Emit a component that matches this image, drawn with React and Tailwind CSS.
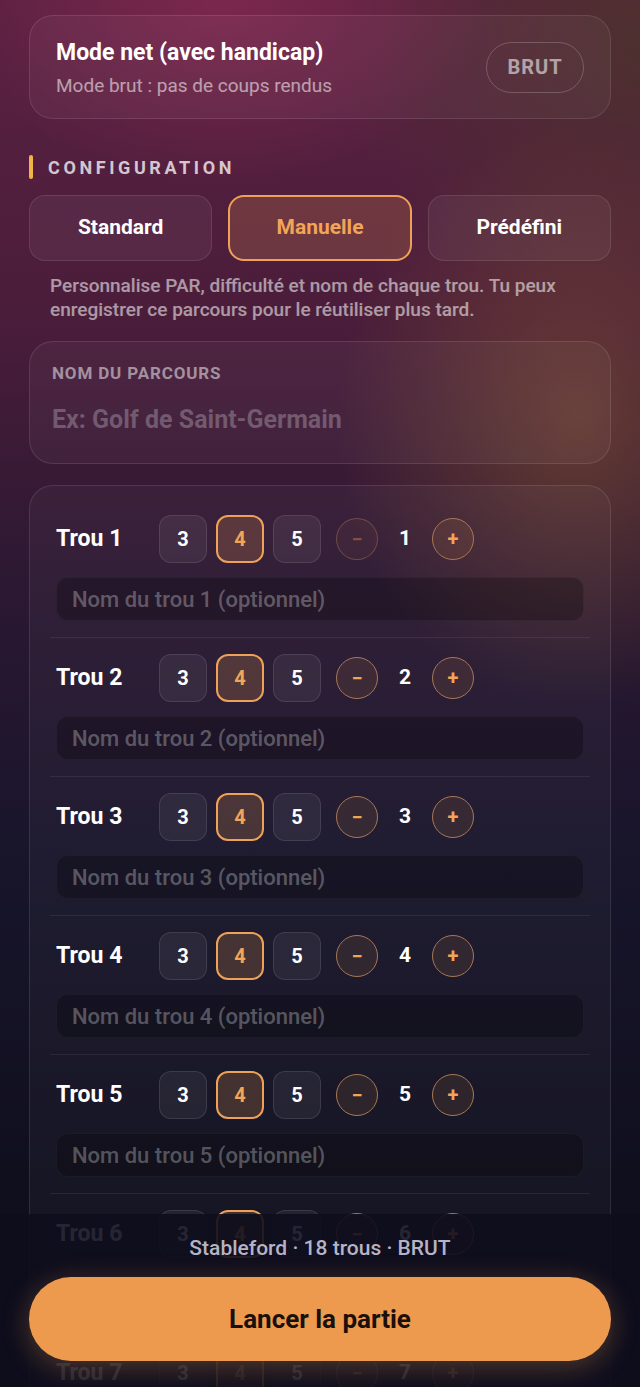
import React from 'react'

const holes = [1, 2, 3, 4, 5, 6, 7]

function ParButton({ value, active }) {
  return (
    <button
      className={
        active
          ? 'flex h-12 w-12 items-center justify-center rounded-xl border-2 border-[#eea157] bg-[#ec9a4e]/20 text-[20px] font-bold text-[#f2a457]'
          : 'flex h-12 w-12 items-center justify-center rounded-xl border border-white/10 bg-white/[0.06] text-[20px] font-bold text-white'
      }
    >
      {value}
    </button>
  )
}

function RoundButton({ children, disabled }) {
  return (
    <button
      className={
        disabled
          ? 'flex h-[42px] w-[42px] items-center justify-center rounded-full border-[1.5px] border-[#a07050]/50 bg-[#ec9a4e]/5 text-[20px] font-bold leading-none text-[#ec9a4e]/40'
          : 'flex h-[42px] w-[42px] items-center justify-center rounded-full border-[1.5px] border-[#a87752] bg-[#ec9a4e]/10 text-[20px] font-bold leading-none text-[#f2a457]'
      }
    >
      {children}
    </button>
  )
}

function HoleRow({ n }) {
  return (
    <div className="border-b border-white/[0.07] px-[6px] py-4">
      <div className="flex items-center">
        <div className="w-[103px] text-[23px] font-bold text-white">Trou {n}</div>
        <div className="flex gap-[9px]">
          <ParButton value={3} />
          <ParButton value={4} active />
          <ParButton value={5} />
        </div>
        <div className="ml-[15px] flex items-center">
          <RoundButton disabled={n === 1}>−</RoundButton>
          <div className="w-[54px] text-center text-[21px] font-bold text-white">{n}</div>
          <RoundButton>+</RoundButton>
        </div>
      </div>
      <div className="mt-[14px] flex h-[44px] items-center rounded-xl border border-white/[0.04] bg-black/25 px-[15px] text-[22px] font-medium text-white/30">
        Nom du trou {n} (optionnel)
      </div>
    </div>
  )
}

export default function App() {
  return (
    <div className="relative h-[1387px] overflow-hidden bg-[#0f0e1d] bg-[radial-gradient(ellipse_50%_28%_at_90%_30%,rgba(125,80,48,0.6),transparent_75%),radial-gradient(ellipse_55%_18%_at_35%_0%,rgba(150,45,85,0.55),transparent_75%),radial-gradient(ellipse_60%_25%_at_100%_3%,rgba(75,52,42,0.8),transparent_80%),linear-gradient(180deg,#5b2142_0%,#4b1d3b_22%,#2c1832_42%,#18152b_62%,#100f1e_85%,#0e0d1b_100%)] font-['Roboto',sans-serif]">
      <div className="px-[29px] pt-[15px]">
        {/* handicap toggle */}
        <div className="flex h-[104px] items-center justify-between rounded-3xl border border-white/10 bg-white/[0.04] px-[26px]">
          <div className="pt-[3px]">
            <div className="text-[23px] font-bold leading-7 text-white">Mode net (avec handicap)</div>
            <div className="mt-[7px] text-[19px] leading-6 text-white/55">Mode brut : pas de coups rendus</div>
          </div>
          <button className="flex h-[51px] w-[98px] items-center justify-center rounded-full border-[1.5px] border-white/20 text-[20px] font-bold tracking-wider text-white/55">
            BRUT
          </button>
        </div>

        {/* configuration */}
        <div className="mt-9 flex h-6 items-center">
          <div className="h-6 w-1 rounded-full bg-[#f2b544]" />
          <div className="ml-[15px] text-[18px] font-bold tracking-[0.2em] text-white/75">CONFIGURATION</div>
        </div>

        <div className="mt-4 grid grid-cols-3 gap-4">
          <button className="h-[66px] rounded-2xl border border-white/10 bg-white/[0.05] text-[21px] font-bold text-white">Standard</button>
          <button className="h-[66px] rounded-2xl border-2 border-[#eea157] bg-[#ec9a4e]/20 text-[21px] font-bold text-[#f2a457]">Manuelle</button>
          <button className="h-[66px] rounded-2xl border border-white/10 bg-white/[0.05] text-[21px] font-bold text-white">Prédéfini</button>
        </div>

        <p className="mt-[13px] px-[21px] text-[19px] font-medium leading-6 text-white/55">
          Personnalise PAR, difficulté et nom de chaque trou. Tu peux enregistrer ce parcours pour le réutiliser plus tard.
        </p>

        {/* course name */}
        <div className="mt-[19px] h-[123px] rounded-3xl border border-white/10 bg-white/[0.04] px-[22px] pt-[21px]">
          <div className="text-[17px] font-bold leading-5 tracking-wider text-white/50">NOM DU PARCOURS</div>
          <div className="mt-[22px] text-[25px] font-bold leading-[30px] text-white/25">Ex: Golf de Saint-Germain</div>
        </div>

        {/* holes */}
        <div className="mt-[21px] rounded-3xl border border-white/10 bg-white/[0.03] px-5 pt-[13px]">
          {holes.map((n) => (
            <HoleRow key={n} n={n} />
          ))}
        </div>
      </div>

      {/* bottom bar */}
      <div className="absolute inset-x-0 top-[1214px] bottom-0 bg-[#0e0d1d]/90 px-[29px]">
        <div className="mt-[22px] text-center text-[21px] font-medium leading-6 text-[#b6b3c6]">
          Stableford · 18 trous · BRUT
        </div>
        <button className="mt-[17px] flex h-[84px] w-full items-center justify-center rounded-full bg-[#ee9a4e] text-[26px] font-bold text-[#1a100c] shadow-[0_6px_28px_rgba(236,154,78,0.3)]">
          Lancer la partie
        </button>
      </div>
    </div>
  )
}
